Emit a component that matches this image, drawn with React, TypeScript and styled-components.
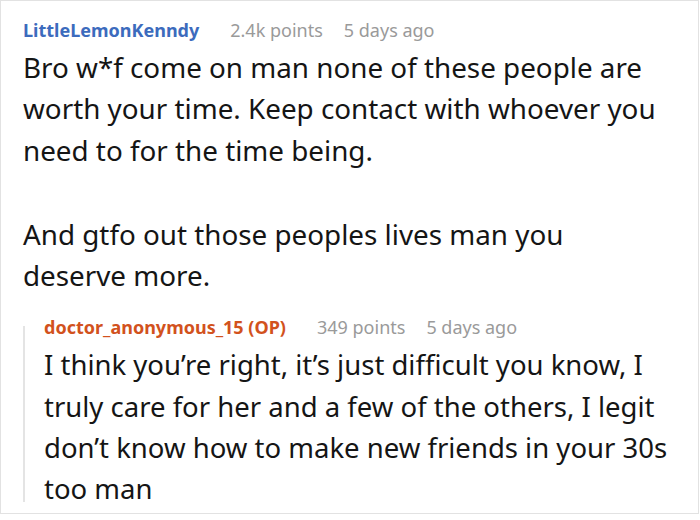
import React from 'react';
import styled, { createGlobalStyle } from 'styled-components';

const GlobalStyle = createGlobalStyle`
  html, body {
    margin: 0;
    padding: 0;
    background: #ffffff;
  }
  body {
    font-family: "Noto Sans", "Open Sans", "DejaVu Sans", sans-serif;
  }
`;

const Frame = styled.div`
  box-sizing: border-box;
  width: 699px;
  height: 514px;
  border: 1px solid #e2e2e2;
  padding: 16px 29px 0 22px;
  overflow: hidden;
`;

const Meta = styled.div<{ $nameColor: string }>`
  display: flex;
  align-items: baseline;
  font-size: 18px;
  line-height: 26px;
  color: #9a9a9a;
  white-space: nowrap;

  & > b {
    color: ${(p) => p.$nameColor};
    font-weight: 700;
    margin-right: 31px;
  }

  & > span + span {
    margin-left: 21px;
  }
`;

const Body = styled.div<{ $size: number }>`
  font-size: ${(p) => p.$size}px;
  line-height: 41.3px;
  color: #151515;
  margin-top: 4px;

  & p {
    margin: 0;
  }
  & p + p {
    margin-top: 43px;
  }
`;

const Reply = styled.div`
  position: relative;
  margin-top: 18px;
  padding-left: 21px;

  &::before {
    content: '';
    position: absolute;
    left: 0;
    top: 12px;
    bottom: 8px;
    width: 2px;
    background: #e4e4e4;
  }
`;

interface CommentProps {
  name: string;
  nameColor: string;
  points: string;
  time: string;
  size?: number;
  paragraphs: string[];
}

const Comment: React.FC<CommentProps> = ({ name, nameColor, points, time, size = 27.8, paragraphs }) => (
  <div>
    <Meta $nameColor={nameColor}>
      <b>{name}</b>
      <span>{points}</span>
      <span>{time}</span>
    </Meta>
    <Body $size={size}>
      {paragraphs.map((t, i) => (
        <p key={i}>{t}</p>
      ))}
    </Body>
  </div>
);

export default function App() {
  return (
    <>
      <GlobalStyle />
      <Frame>
        <Comment
          name="LittleLemonKenndy"
          nameColor="#3c6bbd"
          points="2.4k points"
          time="5 days ago"
          paragraphs={[
            'Bro w*f come on man none of these people are worth your time. Keep contact with whoever you need to for the time being.',
            'And gtfo out those peoples lives man you deserve more.',
          ]}
        />
        <Reply>
          <Comment
            name="doctor_anonymous_15 (OP)"
            nameColor="#d2521d"
            points="349 points"
            time="5 days ago"
            size={27.5}
            paragraphs={[
              'I think you’re right, it’s just difficult you know, I truly care for her and a few of the others, I legit don’t know how to make new friends in your 30s too man',
            ]}
          />
        </Reply>
      </Frame>
    </>
  );
}
